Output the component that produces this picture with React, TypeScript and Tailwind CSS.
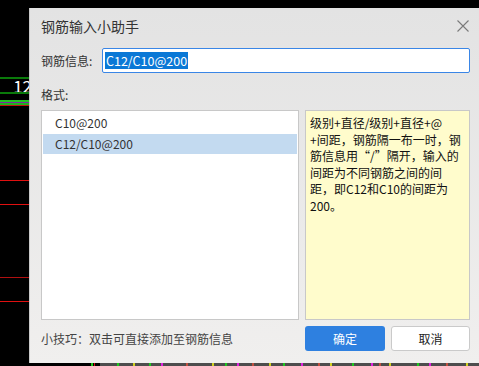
import React from "react";

const font = { fontFamily: '"Noto Sans CJK SC", "Noto Sans", sans-serif' };

const marks: [number, string][] = [
  [17, "#1ec81e"], [14, "#d0d020"], [14, "#1ec81e"], [10, "#e020e0"], [23, "#c05040"], [24, "#d0d020"],
  [11, "#1ec81e"], [10, "#e020e0"], [13, "#c05040"], [15, "#d0d020"], [12, "#1ec81e"], [16, "#e020e0"],
  [15, "#c05040"], [10, "#d0d020"], [20, "#1ec81e"], [17, "#e020e0"], [6, "#c05040"], [8, "#d0d020"],
  [26, "#1ec81e"], [10, "#e020e0"], [15, "#c05040"], [18, "#d0d020"],
];

function LeftStrip() {
  return (
    <div className="flex w-[29px] shrink-0 flex-col bg-black">
      <div className="mt-[77px] h-[2px] bg-[#0a7a0a]" />
      <div className="flex h-[13px] items-center justify-end overflow-visible">
        <span className="mr-[-3px] text-[17px] leading-[13px] text-white">12</span>
      </div>
      <div className="h-[2px] bg-[#0a7a0a]" />
      <div className="mt-[6px] h-[2px] bg-[#22c322]" />
      <div className="h-[1px] bg-[#7a2aa0]" />
      <div className="h-[2px] bg-[#20b020]" />
      <div className="h-[1px] bg-[#c01010]" />
      <div className="mt-[74px] h-[1px] bg-[#e01010]" />
      <div className="mt-[23px] h-[1px] bg-[#e01010]" />
      <div className="mt-[72px] h-[1px] bg-[#b01010]" />
      <div className="mt-[23px] h-[1px] bg-[#e01010]" />
    </div>
  );
}

function BottomStrip() {
  return (
    <div className="flex h-[3px] shrink-0">
      <div className="flex w-[71px] bg-black">
        <div className="ml-[62px] w-[2px] bg-[#1ec81e]" />
        <div className="ml-[1px] w-[1px] bg-[#d01010]" />
      </div>
      <div className="flex flex-1 bg-[#4d4d4d]">
        {marks.map(([gap, c], i) => (
          <div key={i} className="w-[2px]" style={{ marginLeft: gap, background: c }} />
        ))}
      </div>
    </div>
  );
}

const helpLines = [
  "级别+直径/级别+直径+@",
  "+间距，钢筋隔一布一时，钢",
  "筋信息用“/”隔开，输入的",
  "间距为不同钢筋之间的间",
  "距，即C12和C10的间距为",
  "200。",
];

function Dialog() {
  return (
    <div className="flex flex-1 flex-col border-l border-[#c9c9c9] bg-gradient-to-b from-[#e3e3e3] to-[#f0efee] pl-[11px] pr-[9px]">
      <div className="flex h-[36px] items-center justify-between">
        <span className="text-[14px] text-[#333]">钢筋输入小助手</span>
        <svg width="12" height="12" viewBox="0 0 12 12" className="mr-[1px]">
          <path d="M0.5 0.5L11.5 11.5M11.5 0.5L0.5 11.5" stroke="#7a7a7a" strokeWidth="1.1" />
        </svg>
      </div>
      <div className="mt-[4px] flex h-[25px] items-center">
        <span className="w-[61px] text-[12px] text-[#333]">钢筋信息:</span>
        <div className="flex h-[25px] flex-1 items-center rounded-[2px] border-[1.5px] border-[#3a86e6] bg-white pl-[2px]">
          <span className="bg-[#0a78d6] px-[1px] text-[12.5px] leading-[17px] text-white">C12/C10@200</span>
        </div>
      </div>
      <div className="mt-[14px] h-[23px] text-[12px] leading-[16px] text-[#333]">格式:</div>
      <div className="flex h-[210px] gap-[6px]">
        <div className="w-[258px] border border-[#c8c8c8] bg-white p-[1px]">
          <div className="flex h-[22px] items-center pl-[12px] text-[12px] text-[#333]">C10@200</div>
          <div className="flex h-[20px] items-center bg-[#c3daf0] pl-[12px] text-[12px] text-[#333]">C12/C10@200</div>
        </div>
        <div className="flex flex-1 flex-col border border-[#c8c8c8] bg-[#fffccc] pl-[4px] pt-[4px] text-[12px] leading-[16.6px] text-[#111]">
          {helpLines.map((l) => (
            <span key={l} className="whitespace-nowrap">{l}</span>
          ))}
        </div>
      </div>
      <div className="mt-[6px] flex h-[25px] items-center">
        <span className="flex-1 text-[12px] text-[#444]">小技巧：双击可直接添加至钢筋信息</span>
        <button className="h-[25px] w-[80px] rounded-[3px] bg-[#2e80e0] text-[12px] text-white">确定</button>
        <button className="ml-[6px] h-[25px] w-[79px] rounded-[3px] border border-[#cacaca] bg-white text-[12px] text-[#222]">取消</button>
      </div>
    </div>
  );
}

export default function App() {
  return (
    <div className="flex h-[366px] w-[479px] overflow-hidden bg-black" style={font}>
      <LeftStrip />
      <div className="flex flex-1 flex-col">
        <div className="h-[8px] shrink-0 bg-black" />
        <Dialog />
        <BottomStrip />
      </div>
    </div>
  );
}
